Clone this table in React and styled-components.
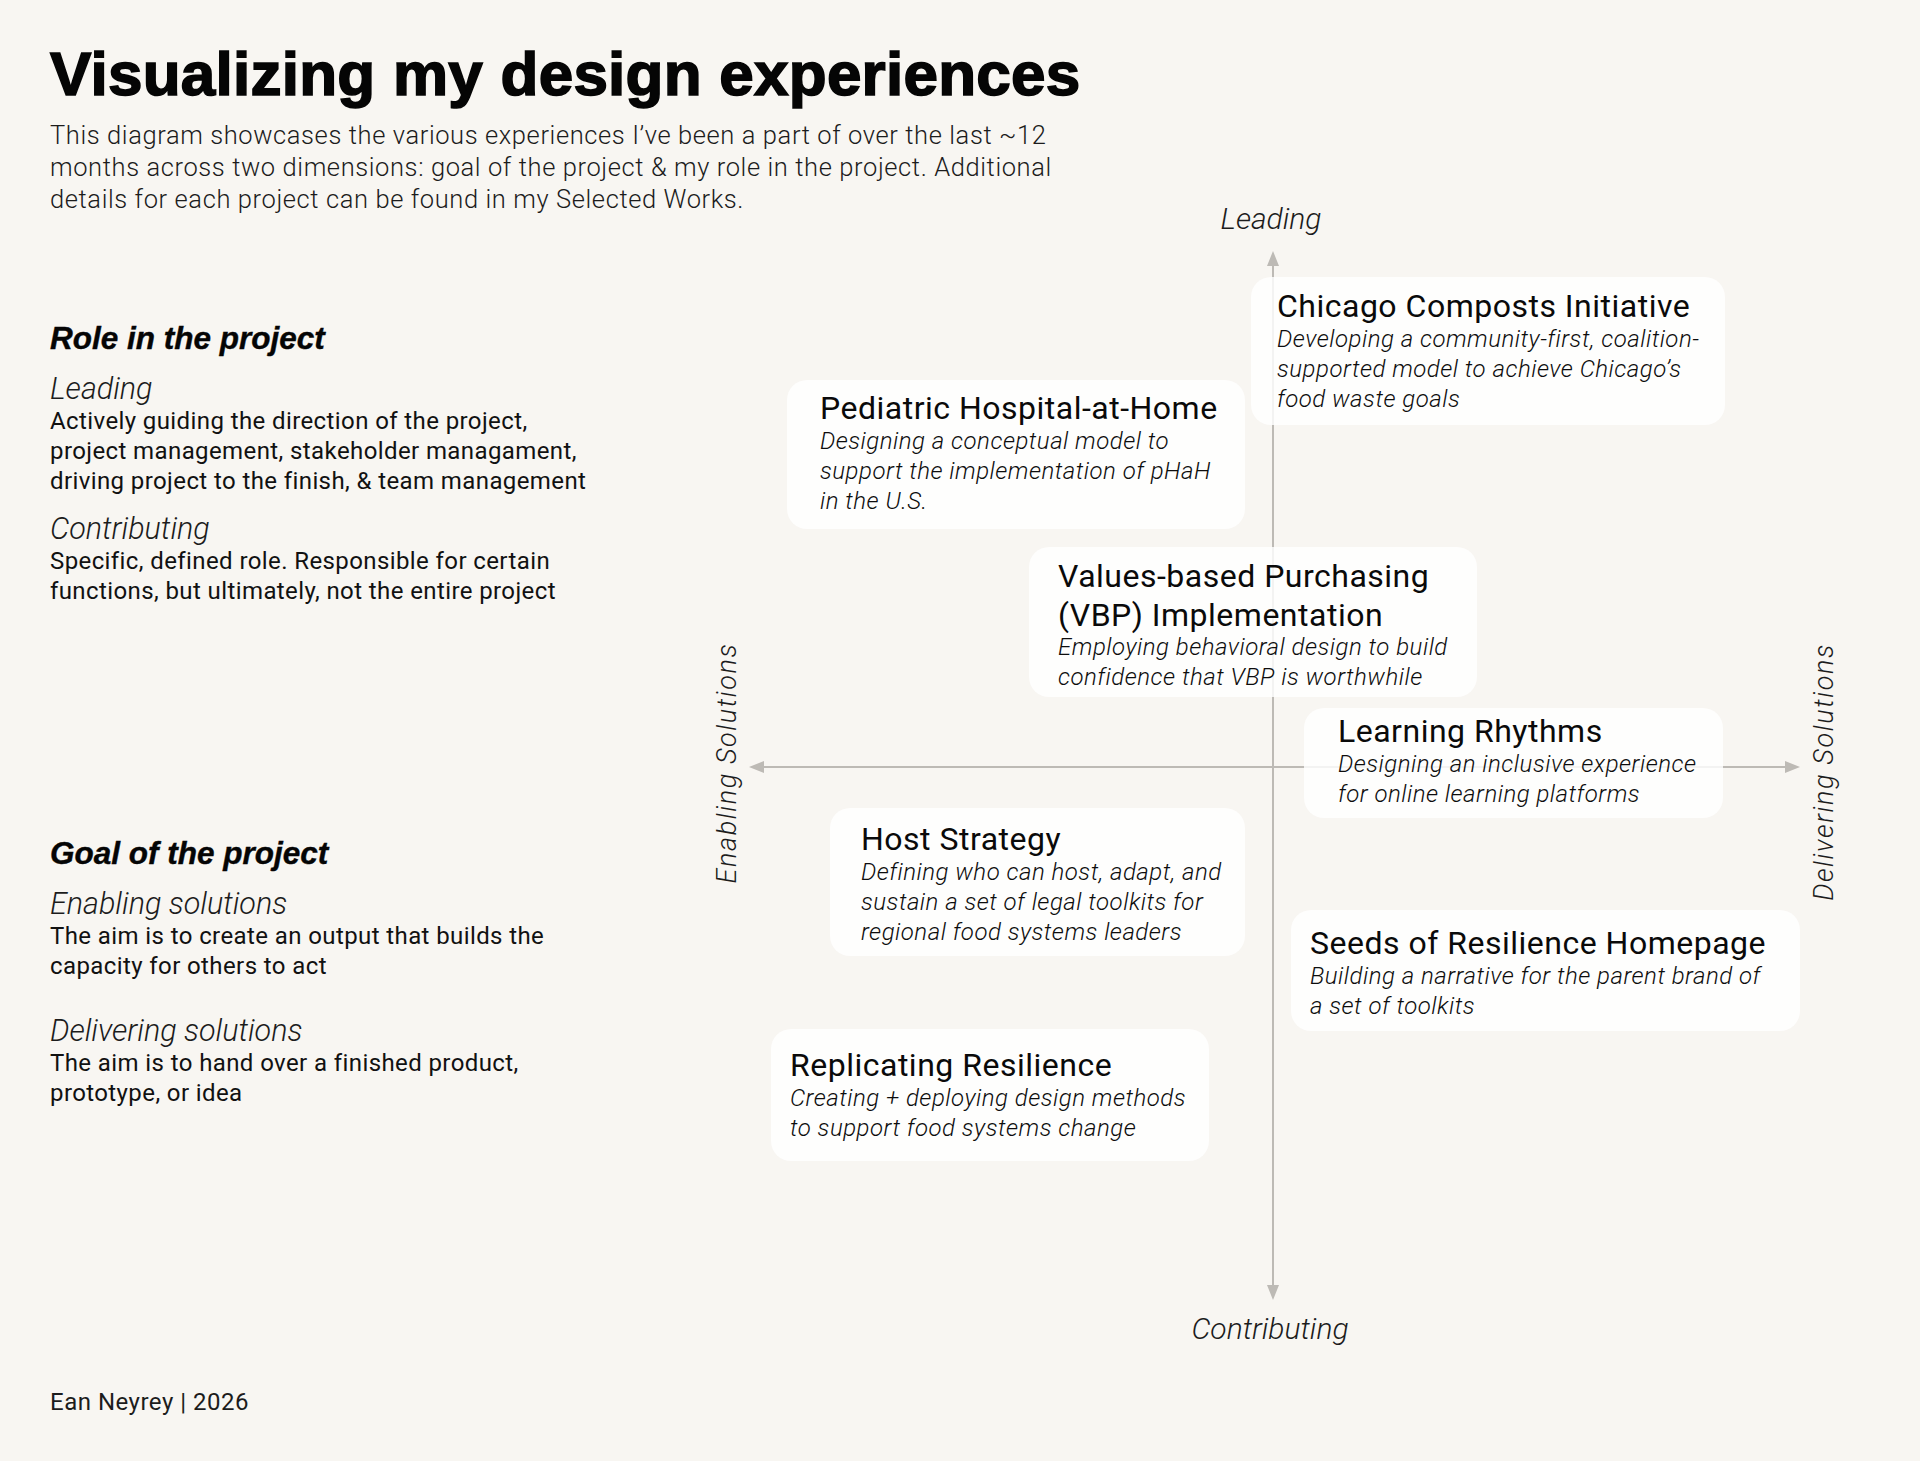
import styled, { createGlobalStyle } from "styled-components"

const GlobalStyle = createGlobalStyle`
  html, body {
    margin: 0;
    padding: 0;
    background: #f8f6f2;
  }
  * { box-sizing: border-box; }
`

const cards = [
  { title: ["Chicago Composts Initiative"], desc: ["Developing a community-first, coalition-", "supported model to achieve Chicago’s", "food waste goals"], x: 551, y: 83, w: 474, h: 148, pt: 10, pl: 26 },
  { title: ["Pediatric Hospital-at-Home"], desc: ["Designing a conceptual model to", "support the implementation of pHaH", "in the U.S."], x: 87, y: 186, w: 458, h: 149, pt: 9, pl: 33 },
  { title: ["Values-based Purchasing", "(VBP) Implementation"], desc: ["Employing behavioral design to build", "confidence that VBP is worthwhile"], x: 329, y: 353, w: 448, h: 150, pt: 10, pl: 29 },
  { title: ["Learning Rhythms"], desc: ["Designing an inclusive experience", "for online learning platforms"], x: 604, y: 514, w: 419, h: 110, pt: 4, pl: 34 },
  { title: ["Host Strategy"], desc: ["Defining who can host, adapt, and", "sustain a set of legal toolkits for", "regional food systems leaders"], x: 130, y: 614, w: 415, h: 148, pt: 12, pl: 31 },
  { title: ["Seeds of Resilience Homepage"], desc: ["Building a narrative for the parent brand of", "a set of toolkits"], x: 591, y: 716, w: 509, h: 121, pt: 14, pl: 19 },
  { title: ["Replicating Resilience"], desc: ["Creating + deploying design methods", "to support food systems change"], x: 71, y: 835, w: 438, h: 132, pt: 17, pl: 19 },
]

export default function App() {
  return (
    <Page>
      <GlobalStyle />
      <Header>
        <Title>Visualizing my design experiences</Title>
        <Intro>
          This diagram showcases the various experiences I’ve been a part of over the last ~12<br />
          months across two dimensions: goal of the project &amp; my role in the project. Additional<br />
          details for each project can be found in my Selected Works.
        </Intro>
      </Header>

      <Main>
        <Legend>
          <Section>
            <SectionTitle>Role in the project</SectionTitle>
            <Term>Leading</Term>
            <Body>
              Actively guiding the direction of the project,<br />
              project management, stakeholder managament,<br />
              driving project to the finish, &amp; team management
            </Body>
            <Term $gap={16}>Contributing</Term>
            <Body>
              Specific, defined role. Responsible for certain<br />
              functions, but ultimately, not the entire project
            </Body>
          </Section>
          <Section $gap={228}>
            <SectionTitle>Goal of the project</SectionTitle>
            <Term>Enabling solutions</Term>
            <Body>
              The aim is to create an output that builds the<br />
              capacity for others to act
            </Body>
            <Term $gap={33}>Delivering solutions</Term>
            <Body>
              The aim is to hand over a finished product,<br />
              prototype, or idea
            </Body>
          </Section>
        </Legend>

        <Diagram>
          <Axes width="1150" height="1150" viewBox="0 0 1150 1150">
            <line x1="573" y1="70" x2="573" y2="1093" stroke="#bdbab5" strokeWidth="2" />
            <line x1="62" y1="573" x2="1087" y2="573" stroke="#bdbab5" strokeWidth="2" />
            <polygon points="573,57 567,72 579,72" fill="#bdbab5" />
            <polygon points="573,1106 567,1091 579,1091" fill="#bdbab5" />
            <polygon points="49,573 64,567 64,579" fill="#bdbab5" />
            <polygon points="1100,573 1085,567 1085,579" fill="#bdbab5" />
          </Axes>

          <AxisLabel style={{ left: 571, top: 25 }}>Leading</AxisLabel>
          <AxisLabel style={{ left: 570, top: 1135 }}>Contributing</AxisLabel>
          <SideLabel style={{ left: 27, top: 569 }}>Enabling Solutions</SideLabel>
          <SideLabel style={{ left: 1124, top: 578 }}>Delivering Solutions</SideLabel>

          {cards.map((c) => (
            <Card
              key={c.title[0]}
              style={{ left: c.x, top: c.y, width: c.w, height: c.h, paddingTop: c.pt, paddingLeft: c.pl }}
            >
              <CardTitle>
                {c.title.map((t) => <span key={t}>{t}</span>)}
              </CardTitle>
              <CardText>
                {c.desc.map((t) => <span key={t}>{t}</span>)}
              </CardText>
            </Card>
          ))}
        </Diagram>
      </Main>

      <Footer>Ean Neyrey | 2026</Footer>
    </Page>
  )
}

const Page = styled.div`
  width: 1920px;
  height: 1461px;
  padding: 43px 0 0 50px;
  background: #f8f6f2;
  color: #111;
  font-family: Roboto, "Liberation Sans", sans-serif;
  overflow: hidden;
`
const Header = styled.header`
  display: flex;
  flex-direction: column;
`
const Title = styled.h1`
  margin: 0;
  font-family: "Liberation Sans", Arial, sans-serif;
  font-weight: 700;
  font-size: 62px;
  line-height: 62px;
  letter-spacing: 0.25px;
  color: #050505;
  -webkit-text-stroke: 1.6px #050505;
`
const Intro = styled.p`
  margin: 14px 0 0;
  font-size: 25.5px;
  line-height: 32px;
  letter-spacing: 0.6px;
  font-weight: 300;
  color: #1c1c1c;
  white-space: nowrap;
`
const Main = styled.div`
  display: flex;
  margin-top: -21px;
`
const Legend = styled.aside`
  width: 650px;
  flex: none;
  padding-top: 125px;
  display: flex;
  flex-direction: column;
`
const Section = styled.section`
  display: flex;
  flex-direction: column;
  margin-top: ${(p) => p.$gap || 0}px;
`
const SectionTitle = styled.h2`
  margin: 0 0 15px;
  font-family: "Liberation Sans", Arial, sans-serif;
  font-style: italic;
  font-weight: 700;
  font-size: 31.5px;
  line-height: 38px;
  color: #050505;
  -webkit-text-stroke: 0.4px #050505;
`
const Term = styled.div`
  margin-top: ${(p) => p.$gap || 0}px;
  font-style: italic;
  font-weight: 300;
  font-size: 30.5px;
  line-height: 34px;
  color: #1c1c1c;
`
const Body = styled.p`
  margin: 0;
  font-size: 24px;
  line-height: 30px;
  letter-spacing: 0.4px;
  color: #111;
  white-space: nowrap;
`
const Diagram = styled.div`
  position: relative;
  width: 1150px;
  height: 1150px;
  flex: none;
`
const Axes = styled.svg`
  position: absolute;
  left: 0;
  top: 0;
`
const AxisLabel = styled.span`
  position: absolute;
  transform: translate(-50%, -50%);
  font-style: italic;
  font-weight: 300;
  font-size: 30px;
  line-height: 34px;
  color: #1c1c1c;
  white-space: nowrap;
`
const SideLabel = styled(AxisLabel)`
  transform: translate(-50%, -50%) rotate(-90deg);
  font-size: 27px;
  letter-spacing: 1.6px;
`
const Card = styled.div`
  position: absolute;
  display: flex;
  flex-direction: column;
  border-radius: 20px;
  background: rgba(255, 255, 255, 0.82);
`
const CardTitle = styled.div`
  display: flex;
  flex-direction: column;
  font-size: 32px;
  line-height: 38.5px;
  letter-spacing: 0.5px;
  color: #0a0a0a;
  white-space: nowrap;
`
const CardText = styled.div`
  display: flex;
  flex-direction: column;
  margin-top: -2px;
  font-style: italic;
  font-weight: 300;
  font-size: 24px;
  line-height: 30px;
  letter-spacing: 0.5px;
  color: #0d0d0d;
  white-space: nowrap;
`
const Footer = styled.footer`
  margin-top: 45px;
  font-size: 24px;
  line-height: 26px;
  letter-spacing: 0.5px;
  color: #1c1c1c;
`
